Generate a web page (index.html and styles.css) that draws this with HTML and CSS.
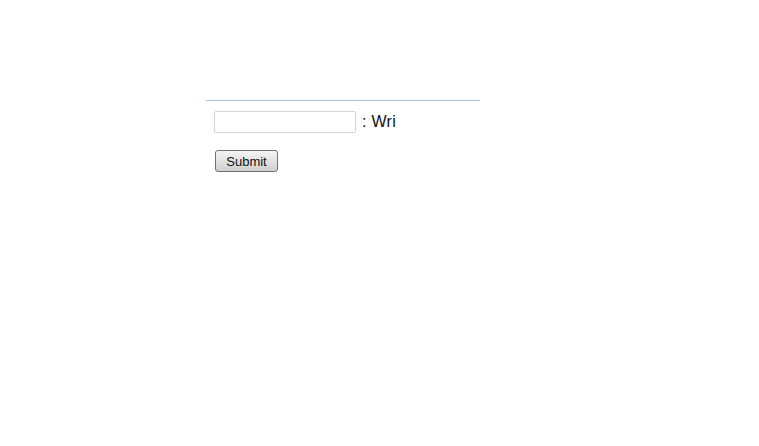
FILE: index.html
```html
<!DOCTYPE html>
<html lang="en">
<head>
    <meta charset="UTF-8">
    <title>Form</title>
    <link rel="stylesheet" href="styles.css">
</head>
<body>
    <div class="box">
        <form class="entry">
            <div class="row">
                <input type="text" class="field">
                <span class="label">: Wri</span>
            </div>
            <button type="button" class="submit">Submit</button>
        </form>
    </div>
</body>
</html>
```
FILE: styles.css
```css
body {
    margin: 0;
    font-family: "Liberation Sans", Arial, sans-serif;
    background: #fff;
}
.box {
    margin: 100px 0 0 206px;
    width: 274px;
    border-top: 1px solid #9fc1de;
    box-shadow: 0 1px 0 #dfeaf4;
}
.entry {
    padding: 10px 0 0 8px;
}
.row {
    display: flex;
    align-items: center;
}
.field {
    box-sizing: border-box;
    width: 142px;
    height: 22px;
    margin: 0;
    border: 1px solid #d4d4d4;
    border-radius: 2px;
    background: #fff;
}
.label {
    margin-left: 6px;
    font-size: 16px;
    letter-spacing: 0.3px;
    color: #111;
}
.submit {
    box-sizing: border-box;
    margin: 17px 0 0 1px;
    width: 63px;
    height: 22px;
    padding: 0;
    font-family: "Liberation Sans", Arial, sans-serif;
    font-size: 13px;
    color: #111;
    border: 1px solid #707070;
    border-radius: 3px;
    background: linear-gradient(#f4f4f4, #e2e2e2 50%, #d0d0d0);
}
```
